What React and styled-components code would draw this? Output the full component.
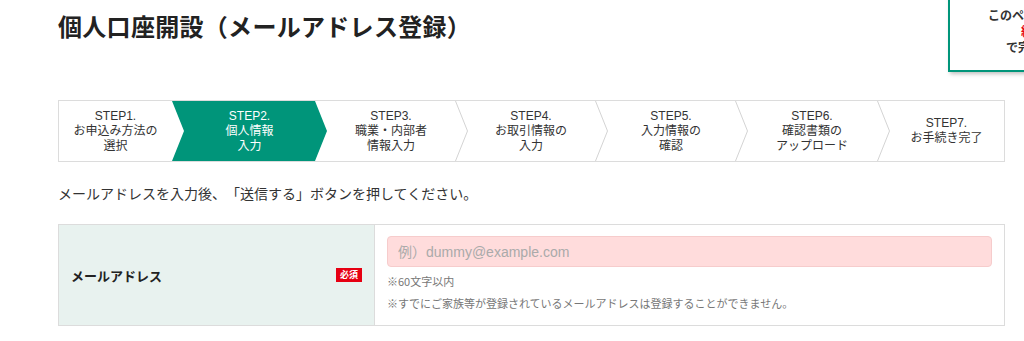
import React from "react";
import styled, { createGlobalStyle } from "styled-components";

const GREEN = "#00957a";

const Global = createGlobalStyle`
  html, body { margin: 0; padding: 0; background: #fff; }
  body {
    font-family: "Liberation Sans", Arial, "Noto Sans CJK JP", sans-serif;
    color: #333;
    overflow: hidden;
    text-spacing-trim: space-all;
  }
`;

const Page = styled.div`
  position: relative;
  width: 1024px;
  height: 341px;
  overflow: hidden;
`;

const Main = styled.div`
  width: 947px;
  margin-left: 58px;
  display: flex;
  flex-direction: column;
`;

const Title = styled.h1`
  margin: 12px 0 0;
  font-family: "Noto Sans CJK JP", sans-serif;
  font-size: 24px;
  line-height: 28px;
  font-weight: 700;
  letter-spacing: 0.3px;
  color: #222;
`;

const Notice = styled.div`
  position: absolute;
  left: 948px;
  top: -12px;
  width: 184px;
  padding: 17px 0 15px;
  border: 2px solid ${GREEN};
  background: #fff;
  box-shadow: 2px 2px 4px rgba(0, 0, 0, 0.25);
  text-align: center;
  font-family: "Noto Sans CJK JP", sans-serif;
  font-size: 12px;
  line-height: 16px;
  font-weight: 700;
  color: #333;
`;

const Red = styled.span`
  color: #e60012;
  display: block;
  letter-spacing: 1px;
`;

const Steps = styled.ol`
  list-style: none;
  margin: 60px 0 0;
  padding: 0;
  display: flex;
  height: 62px;
  box-sizing: border-box;
  border: 1px solid #dcdcdc;
`;

const Step = styled.li`
  position: relative;
  flex: ${(p) => (p.$w ? `0 0 ${p.$w}px` : "1 1 auto")};
  box-sizing: border-box;
  padding-left: ${(p) => (p.$first ? 0 : 12)}px;
  display: flex;
  align-items: center;
  justify-content: center;
  text-align: center;
  font-family: "Liberation Sans", Arial, "Noto Sans CJK JP", sans-serif;
  font-size: 12px;
  line-height: 15px;
  color: ${(p) => (p.$active ? "#fff" : "#333")};

  &::before {
    content: "";
    display: ${(p) => (p.$active ? "block" : "none")};
    position: absolute;
    left: 0;
    top: 0;
    bottom: 0;
    right: -12px;
    background: ${GREEN};
    clip-path: polygon(0 0, calc(100% - 12px) 0, 100% 50%, calc(100% - 12px) 100%, 0 100%, 12px 50%);
    z-index: 0;
  }
`;

const StepLabel = styled.span`
  position: relative;
  z-index: 1;
`;

const Chevron = styled.svg`
  position: absolute;
  top: 0;
  right: -13px;
  width: 13px;
  height: 100%;
  z-index: 2;
  overflow: visible;
`;

const Lead = styled.p`
  margin: 21px 0 0;
  font-family: "Noto Sans CJK JP", sans-serif;
  font-size: 14px;
  line-height: 20px;
  color: #333;
`;

const Table = styled.div`
  margin-top: 21px;
  display: grid;
  grid-template-columns: 316px 1fr;
  border: 1px solid #dcdcdc;
`;

const HeadCell = styled.div`
  background: #e8f2ef;
  border-right: 1px solid #dcdcdc;
  display: flex;
  align-items: center;
  justify-content: space-between;
  padding: 0 12px 0 12px;
`;

const Label = styled.span`
  font-family: "Noto Sans CJK JP", sans-serif;
  font-size: 13px;
  font-weight: 700;
  color: #222;
`;

const Required = styled.span`
  background: #e60012;
  color: #fff;
  font-family: "Noto Sans CJK JP", sans-serif;
  font-size: 9px;
  font-weight: 700;
  line-height: 14px;
  padding: 0 4px;
`;

const BodyCell = styled.div`
  padding: 11px 12px 13px 12px;
  display: flex;
  flex-direction: column;
`;

const Input = styled.input`
  box-sizing: border-box;
  height: 31px;
  width: 100%;
  margin: 0 0 5px;
  padding: 0 10px;
  border: 1px solid #f6cccc;
  border-radius: 4px;
  background: #ffdcdc;
  font-family: "Liberation Sans", Arial, "Noto Sans CJK JP", sans-serif;
  font-size: 14px;
  color: #333;
  outline: none;
  &::placeholder { color: #aaa; }
`;

const Note = styled.p`
  margin: 0 0 ${(p) => p.$gap || 0}px;
  font-family: "Noto Sans CJK JP", sans-serif;
  font-size: 11px;
  line-height: 18px;
  color: #777;
`;

const steps = [
  { lines: ["STEP1.", "お申込み方法の", "選択"], w: 113, first: true },
  { lines: ["STEP2.", "個人情報", "入力"], w: 143, active: true },
  { lines: ["STEP3.", "職業・内部者", "情報入力"], w: 140, div: true },
  { lines: ["STEP4.", "お取引情報の", "入力"], w: 140, div: true },
  { lines: ["STEP5.", "入力情報の", "確認"], w: 140, div: true },
  { lines: ["STEP6.", "確認書類の", "アップロード"], w: 142, div: true },
  { lines: ["STEP7.", "お手続き完了"] },
];

export default function App() {
  return (
    <Page>
      <Global />
      <Main>
        <Title>個人口座開設（メールアドレス登録）</Title>
        <Steps>
          {steps.map((s, i) => (
            <Step key={i} $w={s.w} $first={s.first} $active={s.active}>
              <StepLabel>
                {s.lines.map((l, j) => (
                  <React.Fragment key={j}>
                    {l}
                    {j < s.lines.length - 1 && <br />}
                  </React.Fragment>
                ))}
              </StepLabel>
              {s.div && (
                <Chevron viewBox="0 0 13 60" preserveAspectRatio="none">
                  <polyline
                    points="0.5,0 12.5,30 0.5,60"
                    fill="none"
                    stroke="#d4d4d4"
                    strokeWidth="1"
                    vectorEffect="non-scaling-stroke"
                  />
                </Chevron>
              )}
            </Step>
          ))}
        </Steps>
        <Lead>メールアドレスを入力後、「送信する」ボタンを押してください。</Lead>
        <Table>
          <HeadCell>
            <Label>メールアドレス</Label>
            <Required>必須</Required>
          </HeadCell>
          <BodyCell>
            <Input placeholder="例）dummy@example.com" />
            <Note $gap={4}>※60文字以内</Note>
            <Note>※すでにご家族等が登録されているメールアドレスは登録することができません。</Note>
          </BodyCell>
        </Table>
      </Main>
      <Notice>
        このページの入力は
        <Red>約10分</Red>
        で完了します
      </Notice>
    </Page>
  );
}
